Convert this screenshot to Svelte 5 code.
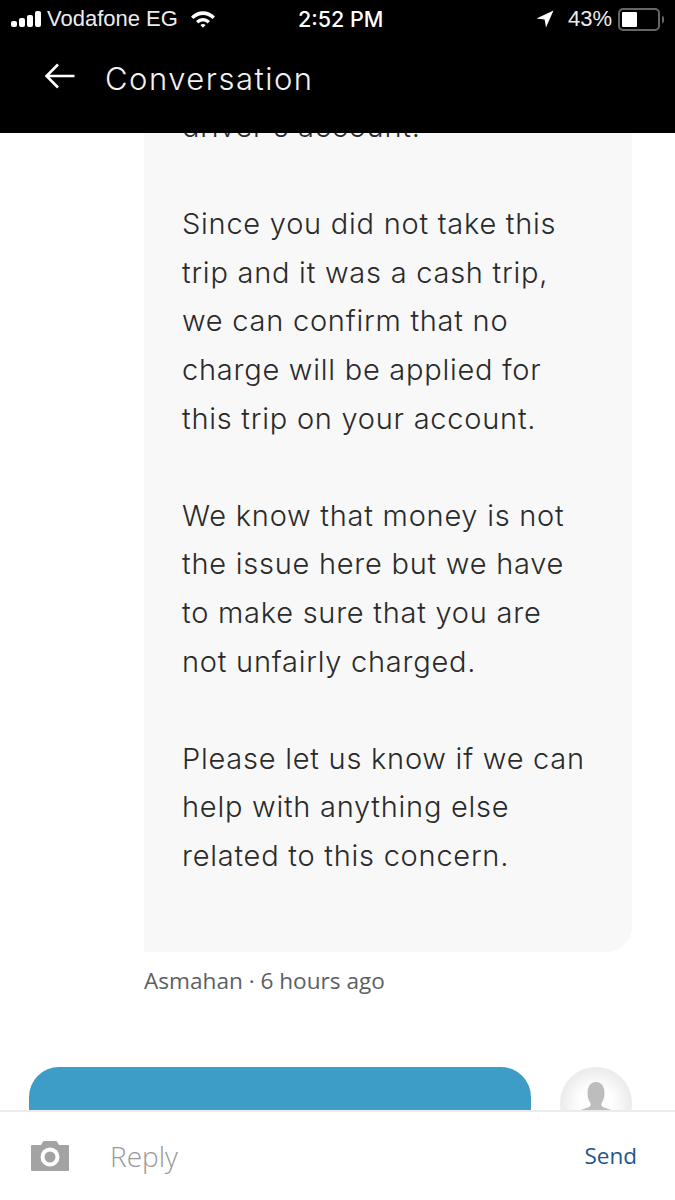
<script>
	let paragraphs = [
		["driver's account."],
		["Since you did not take this", "trip and it was a cash trip,", "we can confirm that no", "charge will be applied for", "this trip on your account."],
		["We know that money is not", "the issue here but we have", "to make sure that you are", "not unfairly charged."],
		["Please let us know if we can", "help with anything else", "related to this concern."]
	];
</script>

<main class="phone">
	<section class="thread">
		<article class="bubble">
			{#each paragraphs as lines}
				<p>
					{#each lines as line}
						<span class="line">{line}</span>
					{/each}
				</p>
			{/each}
		</article>
		<div class="meta">Asmahan · 6 hours ago</div>
		<div class="mine">
			<div class="mine-bubble"></div>
			<div class="avatar">
				<svg width="72" height="72" viewBox="0 0 72 72">
					<path d="M36 15 C42 15 44.500 20 44.500 26 C44.500 31 43 34 41.500 36 C41 38 42 40 44 40.500 L54 44 L54 72 L18 72 L18 44 L28 40.500 C30 40 31 38 30.500 36 C29 34 27.500 31 27.500 26 C27.500 20 30 15 36 15 Z" fill="#bdbdbd" />
				</svg>
			</div>
		</div>
	</section>

	<header class="top">
		<div class="status">
			<div class="status-left">
				<svg class="signal" width="32" height="18" viewBox="0 0 32 18">
					<rect x="1" y="11" width="6" height="6" rx="2" fill="#fff" />
					<rect x="9" y="8" width="6" height="9" rx="2" fill="#fff" />
					<rect x="17" y="5" width="6" height="12" rx="2" fill="#fff" />
					<rect x="25" y="1" width="6" height="16" rx="2" fill="#fff" />
				</svg>
				<span class="carrier">Vodafone EG</span>
				<svg class="wifi" width="26" height="18" viewBox="0 0 26 18">
					<path d="M1 6.500 C8 -0.500 18 -0.500 25 6.500 L22.600 9 C16.600 3.600 9.400 3.600 3.400 9 Z" fill="#fff" />
					<path d="M6 11 C10.400 7 15.600 7 20 11 L17.600 13.400 C14.800 11 11.200 11 8.400 13.400 Z" fill="#fff" />
					<path d="M10.400 15 C12 13.800 14 13.800 15.600 15 L13 17.800 Z" fill="#fff" />
				</svg>
			</div>
			<span class="time">2:52 PM</span>
			<div class="status-right">
				<svg class="arrow" width="18" height="18" viewBox="0 0 18 18">
					<path d="M17.500 0.500 L0.500 8.500 L8.600 9.400 L10 17.500 Z" fill="#fff" />
				</svg>
				<span class="pct">43%</span>
				<div class="battery"><div class="level" style="width: 43%"></div></div>
				<div class="nub"></div>
			</div>
		</div>
		<div class="title-row">
			<svg class="back" width="32" height="28" viewBox="0 0 32 28">
				<path d="M30.500 14 H2.500 M14 2.500 L2.500 14 L14 25.500" fill="none" stroke="#fff" stroke-width="2.600" />
			</svg>
			<h1>Conversation</h1>
		</div>
	</header>

	<footer class="reply">
		<svg class="camera" width="40" height="32" viewBox="0 0 40 32">
			<path d="M2 5 H11 L13 1.500 Q13.500 1 14.500 1 H25.500 Q26.500 1 27 1.500 L29 5 H38 Q39 5 39 6 V30 Q39 31 38 31 H2 Q1 31 1 30 V6 Q1 5 2 5 Z" fill="#a3a3a3" />
			<circle cx="20" cy="17" r="9.500" fill="#fff" />
			<circle cx="20" cy="17" r="5.500" fill="#a3a3a3" />
		</svg>
		<span class="placeholder">Reply</span>
		<span class="send">Send</span>
	</footer>
</main>

<style>
	:global(body) {
		margin: 0;
		background: #fff;
	}
	.phone {
		position: relative;
		width: 675px;
		height: 1200px;
		display: flex;
		flex-direction: column;
		overflow: hidden;
		background: #fff;
	}
	/* scrolled content runs under the black header */
	.top {
		position: absolute;
		top: 0;
		left: 0;
		right: 0;
		height: 133px;
		background: #000;
		color: #fff;
	}
	.status {
		height: 38px;
		display: flex;
		align-items: center;
		justify-content: space-between;
		font-family: "Liberation Sans", sans-serif;
		font-size: 22px;
		position: relative;
	}
	.status-left {
		display: flex;
		align-items: center;
		padding-left: 10px;
	}
	.carrier {
		margin-left: 5px;
		color: #ececec;
	}
	.wifi {
		margin-left: 12px;
	}
	.time {
		position: absolute;
		left: 298px;
		font-family: "Inter", sans-serif;
		font-size: 21.500px;
		font-weight: 500;
	}
	.status-right {
		display: flex;
		align-items: center;
		padding-right: 11px;
	}
	.pct {
		margin-left: 14px;
		color: #ececec;
		font-size: 22px;
	}
	.battery {
		margin-left: 6px;
		border: 2px solid #666;
		border-radius: 5px;
		padding: 2px;
		height: 15px;
		width: 34px;
	}
	.level {
		height: 100%;
		background: #fff;
		border-radius: 1px;
	}
	.nub {
		width: 2px;
		height: 7px;
		margin-left: 2px;
		background: #666;
		border-radius: 0 2px 2px 0;
	}
	.title-row {
		display: flex;
		align-items: center;
		padding: 5px 0 0 44px;
		height: 70px;
		box-sizing: border-box;
	}
	.back {
		flex: none;
	}
	h1 {
		margin: 5px 0 0 29px;
		font-family: "Inter", sans-serif;
		font-weight: 300;
		font-size: 31px;
		color: #f2f2f2;
		letter-spacing: 1.500px;
	}
	.thread {
		flex: 1;
		min-height: 0;
		overflow: hidden;
		display: flex;
		flex-direction: column;
	}
	.bubble {
		flex: none;
		margin: 93px 43px 0 144px;
		padding: 10px 38px 71px;
		background: #f8f8f8;
		border-radius: 0 0 26px 0;
		font-family: "Inter", sans-serif;
		font-weight: 300;
		font-size: 29px;
		line-height: 48.600px;
		color: #2a2a2a;
		letter-spacing: 0.750px;
	}
	.bubble p {
		margin: 0 0 48.600px;
	}
	.bubble p:last-child {
		margin: 0;
	}
	.line {
		display: block;
		white-space: nowrap;
	}
	.meta {
		flex: none;
		margin: 13px 0 0 144px;
		font-family: "Open Sans", sans-serif;
		font-size: 22.600px;
		color: #5c5f63;
	}
	.mine {
		flex: none;
		display: flex;
		justify-content: space-between;
		margin-top: 71px;
		padding: 0 43px 0 29px;
	}
	.mine-bubble {
		width: 502px;
		height: 120px;
		background: #3d9dc7;
		border-radius: 30px 30px 0 0;
	}
	.avatar {
		width: 72px;
		height: 72px;
		border-radius: 50%;
		overflow: hidden;
		background: radial-gradient(circle, #fff 30%, #dcdcdc 100%);
	}
	.avatar svg {
		display: block;
	}
	.reply {
		height: 90px;
		flex: none;
		box-sizing: border-box;
		border-top: 2px solid #ececec;
		display: flex;
		align-items: center;
		padding: 0 38px 0 30px;
		background: #fff;
		font-family: "Open Sans", sans-serif;
	}
	.placeholder {
		margin-left: 40px;
		font-size: 28px;
		font-weight: 300;
		color: #999;
	}
	.send {
		margin-left: auto;
		margin-bottom: 2px;
		font-size: 22.500px;
		color: #21558f;
	}
</style>
